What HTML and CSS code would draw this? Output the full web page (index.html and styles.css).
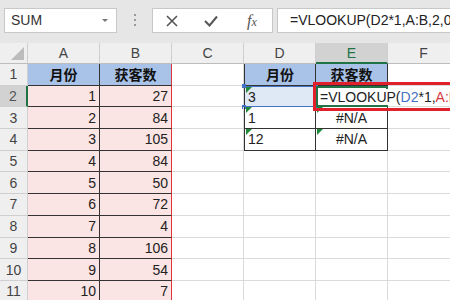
FILE: index.html
```html
<!DOCTYPE html>
<html lang="zh">
<head>
    <meta charset="UTF-8">
    <title>VLOOKUP</title>
    <link rel="stylesheet" href="styles.css">
</head>
<body>
    <div class="toolbar">
        <div class="namebox">SUM<span class="arrow"></span></div>
        <div class="dots"><i></i><i></i><i></i></div>
        <div class="buttons">
            <svg class="btn" width="16" height="16" viewBox="0 0 16 16"><path d="M3 3 L13 13 M13 3 L3 13" stroke="#555" stroke-width="1.6"/></svg>
            <svg class="btn" width="18" height="16" viewBox="0 0 18 16"><path d="M3 8 L7.5 12.5 L15 3.5" stroke="#555" stroke-width="2" fill="none"/></svg>
            <span class="fx">f<small>x</small></span>
        </div>
        <div class="formula">=VLOOKUP(D2*1,A:B,2,0</div>
    </div>

    <div class="sheet">
        <!-- column headers -->
        <div class="ch corner"><span class="tri"></span></div>
        <div class="ch">A</div>
        <div class="ch">B</div>
        <div class="ch">C</div>
        <div class="ch">D</div>
        <div class="ch active">E</div>
        <div class="ch">F</div>

        <!-- row 1 -->
        <div class="rh">1</div>
        <div class="c head">月份</div>
        <div class="c head rng">获客数</div>
        <div class="c"></div>
        <div class="c head box">月份</div>
        <div class="c head box">获客数</div>
        <div class="c"></div>

        <!-- row 2 -->
        <div class="rh active">2</div>
        <div class="c pink num">1</div>
        <div class="c pink num rng">27</div>
        <div class="c"></div>
        <div class="c box ref txt"><span class="warn"></span>3<i class="h tl"></i><i class="h tr"></i><i class="h bl"></i><i class="h br"></i></div>
        <div class="c box editing"><span class="edit">=VLOOKUP(<b class="blue">D2</b>*1,<b class="red">A:B</b>,2,0)</span></div>
        <div class="c"></div>
    </div>
    <div class="annot"></div>
    <script>
        // remaining rows: A/B data, D/E lookup table
        var data = [[2, 84], [3, 105], [4, 84], [5, 50], [6, 72], [7, 4], [8, 106], [9, 54], [10, 7]];
        var lookup = {3: '1', 4: '12'};
        var sheet = document.querySelector('.sheet');
        data.forEach(function (d, i) {
            var r = i + 3;
            var html = '<div class="rh">' + r + '</div>' +
                '<div class="c pink num">' + d[0] + '</div>' +
                '<div class="c pink num rng">' + d[1] + '</div>' +
                '<div class="c"></div>';
            if (lookup[r]) {
                html += '<div class="c box txt"><span class="warn"></span>' + lookup[r] + '</div>' +
                    '<div class="c box na"><span class="warn"></span>#N/A</div>';
            } else {
                html += '<div class="c"></div><div class="c"></div>';
            }
            html += '<div class="c"></div>';
            sheet.insertAdjacentHTML('beforeend', html);
        });
    </script>
</body>
</html>
```

FILE: styles.css
```css
body {
    margin: 0;
    width: 450px;
    height: 300px;
    overflow: hidden;
    position: relative;
    background: #fff;
    font-family: "Liberation Sans", "Noto Sans CJK SC", sans-serif;
    color: #222;
}
.toolbar {
    height: 43px;
    background: #e6e6e6;
    display: flex;
    align-items: flex-start;
    padding-top: 8px;
    box-sizing: border-box;
}
.namebox {
    margin-left: 4px;
    width: 113px;
    height: 25px;
    box-sizing: border-box;
    background: #fff;
    border: 1px solid #c8c8c8;
    font-size: 14px;
    line-height: 23px;
    padding-left: 6px;
    color: #333;
    position: relative;
}
.arrow {
    position: absolute;
    right: 8px;
    top: 10px;
    border-left: 3px solid transparent;
    border-right: 3px solid transparent;
    border-top: 3px solid #777;
}
.dots {
    width: 35px;
    display: flex;
    flex-direction: column;
    align-items: center;
    gap: 3px;
    padding-top: 6px;
}
.dots i {
    width: 2px;
    height: 2px;
    background: #999;
}
.buttons {
    width: 121px;
    height: 25px;
    box-sizing: border-box;
    background: #fff;
    border: 1px solid #c8c8c8;
    display: flex;
    align-items: center;
    padding-left: 11px;
    gap: 22px;
}
.fx {
    font-family: "Liberation Serif", serif;
    font-style: italic;
    font-size: 16px;
    color: #555;
    margin-left: 5px;
}
.fx small {
    font-size: 12px;
}
.formula {
    margin-left: 4px;
    flex: 1;
    height: 25px;
    box-sizing: border-box;
    background: #fff;
    border: 1px solid #c8c8c8;
    border-right: none;
    font-size: 14px;
    line-height: 23px;
    padding-left: 12px;
    white-space: nowrap;
    overflow: hidden;
}
.sheet {
    display: grid;
    grid-template-columns: 28px repeat(6, 72px);
    grid-template-rows: 21px repeat(11, 21.7px);
    font-size: 14px;
}
.ch, .rh {
    background: #efefef;
    color: #444;
    box-sizing: border-box;
    display: flex;
    align-items: center;
    justify-content: center;
    border-right: 1px solid #cfcfcf;
    border-bottom: 1px solid #cfcfcf;
}
.ch {
    border-bottom-color: #bdbdbd;
}
.ch.active {
    background: #d2d2d2;
    color: #217346;
    border-bottom: 2px solid #217346;
}
.rh.active {
    background: #d2d2d2;
    color: #555;
    border-right: 2px solid #217346;
}
.corner {
    position: relative;
}
.tri {
    position: absolute;
    right: 3px;
    bottom: 3px;
    border-left: 13px solid transparent;
    border-bottom: 13px solid #bcbcbc;
}
.c {
    box-sizing: border-box;
    border-right: 1px solid #dadada;
    border-bottom: 1px solid #dadada;
    display: flex;
    align-items: center;
    padding: 0 3px;
    white-space: nowrap;
    position: relative;
}
.head {
    background: #a9c3e8;
    font-weight: bold;
    justify-content: center;
    color: #111;
    border-right-color: #333;
    border-bottom-color: #333;
}
.pink {
    background: #fbe4e4;
    border-right-color: #333;
    border-bottom-color: #333;
}
.num {
    justify-content: flex-end;
}
.rng {
    border-right: 1px solid #e0343c;
}
.box {
    border-right-color: #333;
    border-bottom-color: #333;
}
.box:nth-child(7n+5) {
    border-left: 1px solid #333;
}
.txt {
    justify-content: flex-start;
}
.na {
    justify-content: center;
}
.warn {
    position: absolute;
    left: 1px;
    top: 0;
    border-right: 6px solid transparent;
    border-top: 6px solid #1e8a3a;
}
.ref {
    background: #dfe9f6;
    border: 1px solid #4472c4;
}
.h {
    position: absolute;
    width: 4px;
    height: 4px;
    background: #4472c4;
}
.tl { left: -3px; top: -3px; }
.tr { right: -3px; top: -3px; }
.bl { left: -3px; bottom: -3px; }
.br { right: -3px; bottom: -3px; }
.editing {
    z-index: 2;
    border: 2px solid #217346;
    background: #fff;
    overflow: visible;
    padding-left: 2px;
}
.edit {
    background: #fff;
    padding-right: 40px;
}
.edit b {
    font-weight: normal;
}
.blue {
    color: #4472c4;
}
.red {
    color: #d6393e;
}
.annot {
    position: absolute;
    left: 313px;
    top: 82px;
    width: 150px;
    height: 29px;
    box-sizing: border-box;
    border: 3px solid #e0202a;
    z-index: 3;
}
```
